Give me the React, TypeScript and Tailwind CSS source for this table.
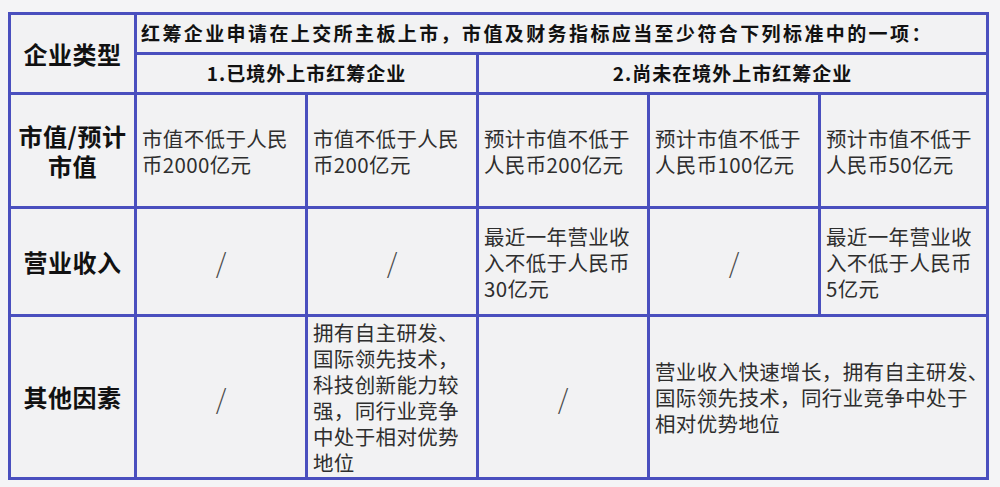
import React from "react";

const body =
  "text-[20.5px] leading-[26px] text-[#2e2e2e] tracking-[0.35px] whitespace-nowrap";
const cell = "bg-[#f2f2f3] flex items-center";

function Lines({ lines }: { lines: string[] }) {
  return (
    <div className={body}>
      {lines.map((l, i) => (
        <div key={i}>{l}</div>
      ))}
    </div>
  );
}

function TextCell({ lines, className = "" }: { lines: string[]; className?: string }) {
  return (
    <div className={`${cell} pl-[5px] ${className}`}>
      <Lines lines={lines} />
    </div>
  );
}

function Slash({ className = "" }: { className?: string }) {
  return (
    <div className={`${cell} justify-center ${className}`}>
      <span className="text-[27px] leading-none text-[#4a4a4a] font-light">/</span>
    </div>
  );
}

function RowHead({ lines, className = "" }: { lines: string[]; className?: string }) {
  return (
    <div className={`${cell} justify-center ${className}`}>
      <div className="text-[24px] leading-[30px] font-bold text-[#111] text-center tracking-[0.5px]">
        {lines.map((l, i) => (
          <div key={i}>{l}</div>
        ))}
      </div>
    </div>
  );
}

export default function App() {
  return (
    <div
      className="w-[1000px] h-[487px] bg-[#f4f4f6] pt-[12px] pl-[8px]"
      style={{ fontFamily: '"Noto Sans CJK SC", "Noto Sans", sans-serif' }}
    >
      <div className="w-[981px] grid grid-cols-[123px_168px_168px_168px_168px_165px] grid-rows-[37px_37px_111px_105px_160px] gap-[3px] p-[3px] bg-[#4a4fbe]">
        <RowHead lines={["企业类型"]} className="row-span-2" />
        <div className={`${cell} col-span-5 pl-[4px]`}>
          <span className="text-[19px] font-bold text-[#111] tracking-[2.4px] whitespace-nowrap">
            红筹企业申请在上交所主板上市，市值及财务指标应当至少符合下列标准中的一项：
          </span>
        </div>
        <div className={`${cell} col-span-2 justify-center`}>
          <span className="text-[19px] font-bold text-[#111] tracking-[1px] whitespace-nowrap">
            1.已境外上市红筹企业
          </span>
        </div>
        <div className={`${cell} col-span-3 justify-center`}>
          <span className="text-[19px] font-bold text-[#111] tracking-[1px] whitespace-nowrap">
            2.尚未在境外上市红筹企业
          </span>
        </div>

        <RowHead lines={["市值/预计", "市值"]} />
        <TextCell lines={["市值不低于人民", "币2000亿元"]} />
        <TextCell lines={["市值不低于人民", "币200亿元"]} />
        <TextCell lines={["预计市值不低于", "人民币200亿元"]} />
        <TextCell lines={["预计市值不低于", "人民币100亿元"]} />
        <TextCell lines={["预计市值不低于", "人民币50亿元"]} />

        <RowHead lines={["营业收入"]} />
        <Slash />
        <Slash />
        <TextCell lines={["最近一年营业收", "入不低于人民币", "30亿元"]} />
        <Slash />
        <TextCell lines={["最近一年营业收", "入不低于人民币", "5亿元"]} />

        <RowHead lines={["其他因素"]} />
        <Slash />
        <TextCell
          lines={[
            "拥有自主研发、",
            "国际领先技术，",
            "科技创新能力较",
            "强，同行业竞争",
            "中处于相对优势",
            "地位",
          ]}
        />
        <Slash />
        <TextCell
          className="col-span-2"
          lines={[
            "营业收入快速增长，拥有自主研发、",
            "国际领先技术，同行业竞争中处于",
            "相对优势地位",
          ]}
        />
      </div>
    </div>
  );
}
